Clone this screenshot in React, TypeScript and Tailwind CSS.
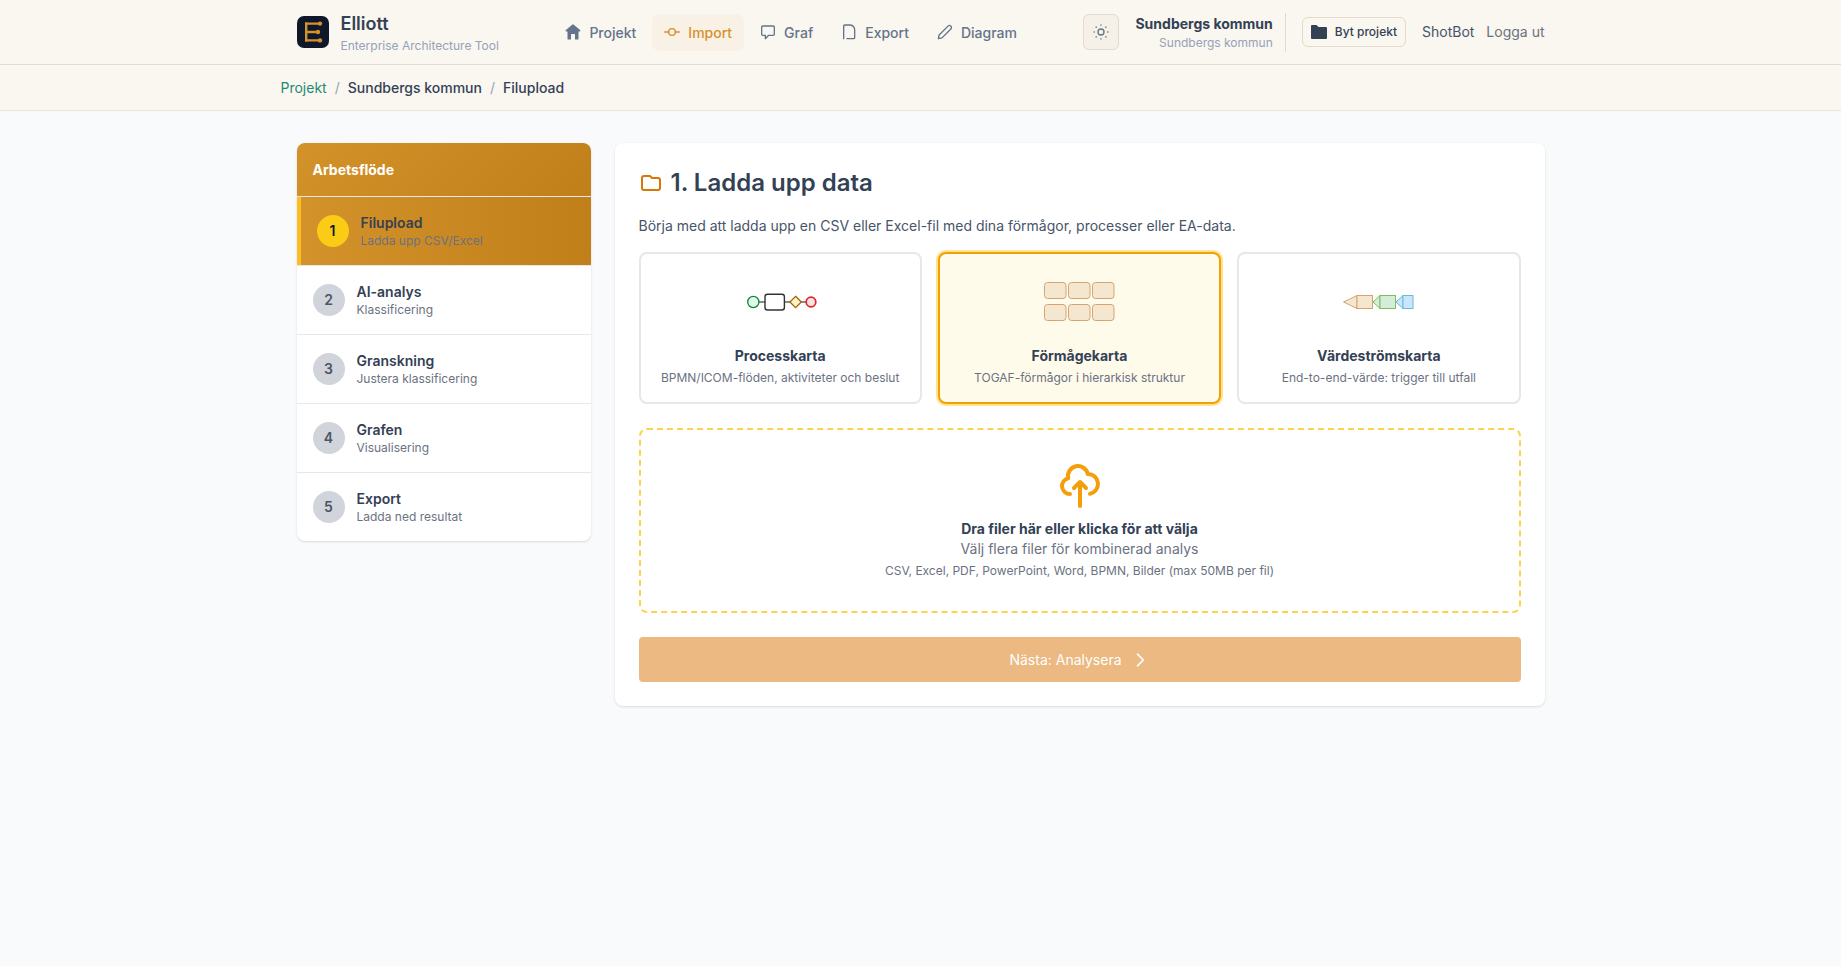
import type { ReactNode } from "react";

type Step = { id: number; title: string; desc: string };
type NavItem = { label: string; icon: ReactNode; active?: boolean };
type MapType = { title: string; desc: string; art: ReactNode; selected?: boolean };

function StrokeIcon({ children }: { children: ReactNode }) {
  return (
    <svg className="h-4 w-4 shrink-0" viewBox="0 0 24 24" fill="none" stroke="currentColor" strokeWidth="2" strokeLinecap="round" strokeLinejoin="round" aria-hidden="true">
      {children}
    </svg>
  );
}

function Logo() {
  return (
    <svg className="h-8 w-8" viewBox="0 0 32 32" aria-hidden="true">
      <rect width="32" height="32" rx="7" fill="#0f172a" />
      <g stroke="#d4922a" strokeWidth="2.4" fill="none">
        <path d="M9.2 6.4v19.2" />
        <path d="M8 7.6h15M8 16h13M8 24.4h15" />
      </g>
      <g fill="#d4922a">
        <circle cx="23" cy="7.6" r="2.2" />
        <circle cx="21" cy="16" r="2.2" />
        <circle cx="23" cy="24.4" r="2.2" />
      </g>
    </svg>
  );
}

const navItems: NavItem[] = [
  {
    label: "Projekt",
    icon: (
      <svg className="h-4 w-4 shrink-0" viewBox="0 0 16 16" fill="currentColor" aria-hidden="true">
        <path d="M7.500 0.400a.8.8 0 011 0l6.600 5.700c.5.500.2 1.300-.5 1.300H13.500V15a.6.6 0 01-.6.600H10V10.500a.5.5 0 00-.5-.5h-3a.5.5 0 00-.5.5v5.100H3.100a.6.6 0 01-.6-.6V7.400H1.400c-.7 0-1-.8-.5-1.300z" />
      </svg>
    ),
  },
  {
    label: "Import",
    active: true,
    icon: (
      <StrokeIcon>
        <circle cx="12" cy="12" r="5" />
        <path d="M1 12h6M17 12h6" />
      </StrokeIcon>
    ),
  },
  {
    label: "Graf",
    icon: (
      <StrokeIcon>
        <path d="M8 17H4a1.500 1.500 0 01-1.500-1.500v-11A1.500 1.500 0 014 3h16a1.500 1.500 0 011.500 1.500v11A1.500 1.500 0 0120 17h-7l-5 5v-5z" />
      </StrokeIcon>
    ),
  },
  {
    label: "Export",
    icon: (
      <StrokeIcon>
        <path d="M4 22V3a1.500 1.500 0 011.500-1.500H14q6 1 6.500 7v12A1.500 1.500 0 0119 22H9" />
      </StrokeIcon>
    ),
  },
  {
    label: "Diagram",
    icon: (
      <StrokeIcon>
        <path d="M16.500 3.200a3 3 0 014.300 4.300L7.500 20.800 2 22l1.200-5.500L16.500 3.200z" />
      </StrokeIcon>
    ),
  },
];

const steps: Step[] = [
  { id: 1, title: "Filupload", desc: "Ladda upp CSV/Excel" },
  { id: 2, title: "AI-analys", desc: "Klassificering" },
  { id: 3, title: "Granskning", desc: "Justera klassificering" },
  { id: 4, title: "Grafen", desc: "Visualisering" },
  { id: 5, title: "Export", desc: "Ladda ned resultat" },
];

const mapTypes: MapType[] = [
  {
    title: "Processkarta",
    desc: "BPMN/ICOM-flöden, aktiviteter och beslut",
    art: (
      <>
        <path d="M19 32h6M45 32h5M61 32h5" stroke="#666" strokeWidth="1.5" />
        <circle cx="13.3" cy="32" r="5.6" fill="#dcfce7" stroke="#15803d" strokeWidth="1.3" />
        <rect x="25" y="24.2" width="19.4" height="15.8" rx="2.5" fill="#fff" stroke="#333" strokeWidth="1.4" />
        <path d="M55.6 26.3L61.3 32l-5.7 5.7L49.9 32z" fill="#fef3c7" stroke="#a16207" strokeWidth="1.3" />
        <circle cx="71" cy="32" r="4.8" fill="#fee2e2" stroke="#dc2626" strokeWidth="1.7" />
      </>
    ),
  },
  {
    title: "Förmågekarta",
    desc: "TOGAF-förmågor i hierarkisk struktur",
    selected: true,
    art: (
      <g fill="#f5e6d0" stroke="#d4a574">
        <rect x="5.5" y="12.5" width="21.5" height="16" rx="3" />
        <rect x="29.5" y="12.5" width="21.5" height="16" rx="3" />
        <rect x="53.5" y="12.5" width="21.5" height="16" rx="3" />
        <rect x="5.5" y="34.5" width="21.5" height="16" rx="3" />
        <rect x="29.5" y="34.5" width="21.5" height="16" rx="3" />
        <rect x="53.5" y="34.5" width="21.5" height="16" rx="3" />
      </g>
    ),
  },
  {
    title: "Värdeströmskarta",
    desc: "End-to-end-värde: trigger till utfall",
    art: (
      <>
        <g fill="#f5e6d0" stroke="#d4a574">
          <path d="M18 25.5v13L4.5 32z" />
          <rect x="18" y="25.5" width="15.5" height="13" />
        </g>
        <g fill="#d4edda" stroke="#7bc05a">
          <path d="M41 25.5v13L34 32z" />
          <rect x="41" y="25.5" width="15.5" height="13" />
        </g>
        <g fill="#cce5ff" stroke="#6bbccf">
          <path d="M64 25.5v13L57 32z" />
          <rect x="64" y="25.5" width="10" height="13" />
        </g>
      </>
    ),
  },
];

function Header() {
  return (
    <header className="border-b border-[#e5d9cb] bg-[#faf6f0] shadow-sm">
      <div className="mx-auto flex h-16 max-w-7xl items-center justify-between px-4">
        <a href="#" className="flex items-center gap-3">
          <Logo />
          <span className="flex flex-col">
            <span className="text-lg leading-7 font-semibold text-[#334155]">Elliott</span>
            <span className="text-xs text-[#94a3b8]">Enterprise Architecture Tool</span>
          </span>
        </a>

        <nav className="flex items-center gap-1">
          {navItems.map((item) => (
            <a
              key={item.label}
              href="#"
              className={
                item.active
                  ? "flex items-center gap-2 rounded-lg bg-[#f9f0e6] px-3 py-2 text-sm leading-[21px] font-medium text-[#d4922a]"
                  : "flex items-center gap-2 rounded-lg px-3 py-2 text-sm leading-[21px] font-medium text-[#64748b]"
              }
            >
              {item.icon}
              {item.label}
            </a>
          ))}
        </nav>

        <div className="flex items-center gap-4">
          <button type="button" aria-label="Byt tema" className="flex h-9 w-9 items-center justify-center rounded-md border border-[#e5d9cb] bg-[#f5f0e8] text-[#64748b]">
            <StrokeIcon>
              <circle cx="12" cy="12" r="4.5" />
              <path d="M12 1.500v.500M12 22v.500M1.500 12h.500M22 12h.500M4.600 4.600l.300.300M19.100 19.100l.300.300M4.600 19.400l.300-.300M19.100 4.900l.300-.300" />
            </StrokeIcon>
          </button>
          <div className="border-r border-[#e5d9cb] pr-3 text-right">
            <div className="text-sm leading-[21px] font-bold text-[#334155]">Sundbergs kommun</div>
            <div className="text-xs leading-[18px] text-[#94a3b8]">Sundbergs kommun</div>
          </div>
          <button type="button" className="flex items-center gap-2 rounded-md border border-[#e5d9cb] px-2 py-1.5 text-xs font-medium text-[#334155]">
            <svg className="h-4 w-4" viewBox="0 0 16 16" fill="currentColor" aria-hidden="true">
              <path d="M0 2a1 1 0 011-1h4.500L7.500 3H15a1 1 0 011 1v10a1 1 0 01-1 1H1a1 1 0 01-1-1z" />
            </svg>
            Byt projekt
          </button>
          <div className="flex items-center gap-3 text-sm">
            <span className="text-[#475569]">ShotBot</span>
            <a href="#" className="text-[#6b7280]">Logga ut</a>
          </div>
        </div>
      </div>
    </header>
  );
}

function Breadcrumb() {
  return (
    <nav aria-label="Brödsmulor" className="border-b border-[#eae4dc] bg-[#faf6f0]">
      <ol className="mx-auto flex max-w-7xl gap-2 py-3 text-sm leading-[21px] font-medium text-[#334155]">
        <li><a href="#" className="font-normal text-[#1f8a70]">Projekt</a></li>
        <li className="font-normal text-[#94a3b8]">/</li>
        <li>Sundbergs kommun</li>
        <li className="font-normal text-[#94a3b8]">/</li>
        <li>Filupload</li>
      </ol>
    </nav>
  );
}

function Workflow() {
  return (
    <aside className="self-start overflow-hidden rounded-lg bg-white shadow">
      <h2 className="border-b border-gray-200 bg-linear-135 from-[#d4922a] to-[#c17f1a] p-4 text-sm leading-[21px] font-bold text-white">
        Arbetsflöde
      </h2>
      <ol className="divide-y divide-gray-200">
        {steps.map((step) => {
          const active = step.id === 1;
          return (
            <li key={step.id}>
              <a
                href="#"
                className={
                  active
                    ? "flex items-center gap-3 border-l-4 border-[#fbbf24] bg-linear-to-r from-[#d4922a] to-[#c17f1a] p-4"
                    : "flex items-center gap-3 p-4"
                }
              >
                <span
                  className={
                    active
                      ? "flex h-8 w-8 items-center justify-center rounded-full bg-[#facc15] text-sm font-semibold text-gray-900"
                      : "flex h-8 w-8 items-center justify-center rounded-full bg-[#d1d5db] text-sm font-semibold text-gray-600"
                  }
                >
                  {step.id}
                </span>
                <span className="flex flex-col">
                  <span className={active ? "text-sm font-semibold text-[#374151]" : "text-sm font-semibold text-[#334155]"}>{step.title}</span>
                  <span className="text-xs text-gray-500">{step.desc}</span>
                </span>
              </a>
            </li>
          );
        })}
      </ol>
    </aside>
  );
}

function UploadPanel() {
  return (
    <section className="col-span-3 rounded-lg bg-white p-6 shadow">
      <h1 className="mb-4 flex items-center gap-2 text-2xl font-semibold text-[#334155]">
        <svg className="h-6 w-6 text-[#d97706]" viewBox="0 0 24 24" fill="none" stroke="currentColor" strokeWidth="2" strokeLinecap="round" strokeLinejoin="round" aria-hidden="true">
          <path d="M3 7v10a2 2 0 002 2h14a2 2 0 002-2V9a2 2 0 00-2-2h-6l-2-2H5a2 2 0 00-2 2z" />
        </svg>
        1. Ladda upp data
      </h1>
      <p className="mb-4 text-sm leading-[21px] text-[#475569]">
        Börja med att ladda upp en CSV eller Excel-fil med dina förmågor, processer eller EA-data.
      </p>

      <div className="mb-6 grid grid-cols-3 gap-4">
        {mapTypes.map((type) => (
          <button
            key={type.title}
            type="button"
            aria-pressed={!!type.selected}
            className={
              type.selected
                ? "flex flex-col items-center rounded-lg border-2 border-[#f59e0b] bg-[#fffbeb] p-4 ring-2 ring-[#fde68a]"
                : "flex flex-col items-center rounded-lg border-2 border-gray-200 bg-white p-4"
            }
          >
            <svg className="mb-3 h-16 w-20" viewBox="0 0 80 64" fill="none" aria-hidden="true">
              {type.art}
            </svg>
            <span className="mb-1 text-sm font-bold text-[#334155]">{type.title}</span>
            <span className="text-xs text-gray-500">{type.desc}</span>
          </button>
        ))}
      </div>

      <button type="button" className="mb-6 flex w-full flex-col items-center rounded-lg border-2 border-dashed border-[#fcd34d] p-8">
        <svg className="mb-2 h-12 w-12 text-[#f59e0b]" viewBox="0 0 24 24" fill="none" stroke="currentColor" strokeWidth="2" strokeLinecap="round" strokeLinejoin="round" aria-hidden="true">
          <path d="M7 16a4 4 0 01-.88-7.903A5 5 0 1115.9 6L16 6a5 5 0 011 9.9M15 13l-3-3m0 0l-3 3m3-3v12" />
        </svg>
        <span className="text-sm leading-[21px] font-bold text-[#334155]">Dra filer här eller klicka för att välja</span>
        <span className="text-sm text-gray-500">Välj flera filer för kombinerad analys</span>
        <span className="mt-1 text-xs text-gray-500">CSV, Excel, PDF, PowerPoint, Word, BPMN, Bilder (max 50MB per fil)</span>
      </button>

      <button type="button" disabled className="flex w-full items-center justify-center gap-2 rounded bg-[#ebb981] px-4 py-3 text-sm leading-[21px] text-white">
        Nästa: Analysera
        <svg className="h-5 w-5" viewBox="0 0 24 24" fill="none" stroke="currentColor" strokeWidth="2" strokeLinecap="round" strokeLinejoin="round" aria-hidden="true">
          <path d="M9 5l7 7-7 7" />
        </svg>
      </button>
    </section>
  );
}

export default function App() {
  return (
    <div className="min-h-screen bg-[#f9fafc] font-[Inter,sans-serif]">
      <Header />
      <Breadcrumb />
      <main className="mx-auto grid max-w-7xl grid-cols-4 gap-6 px-4 py-8">
        <Workflow />
        <UploadPanel />
      </main>
    </div>
  );
}
